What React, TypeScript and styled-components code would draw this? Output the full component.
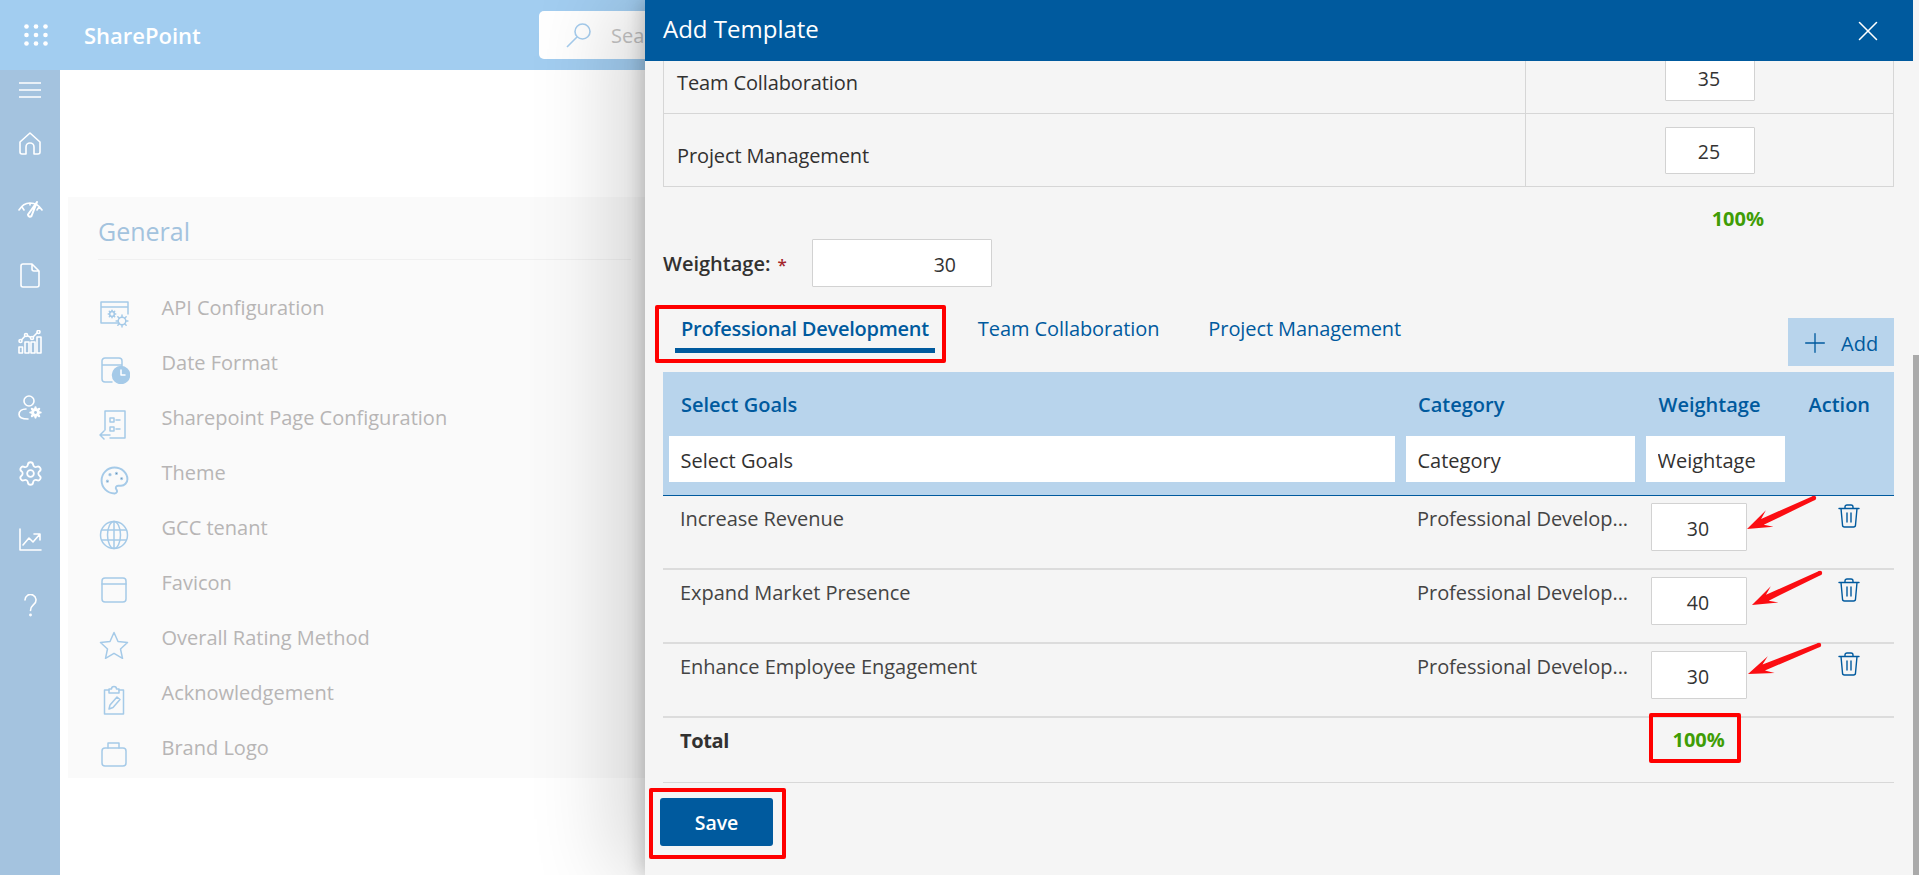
import React from "react";
import styled, { createGlobalStyle } from "styled-components";
import { Settings, Palette, Plus, X } from "lucide-react";

const NAVY = "#005a9e";
const FONT = `"Open Sans", "Noto Sans", sans-serif`;

const Global = createGlobalStyle`
  html, body { margin: 0; padding: 0; background: #fff; }
  body { font-family: ${FONT}; overflow: hidden; }
  * { box-sizing: border-box; }
`;

const Root = styled.div`
  position: relative;
  width: 1919px;
  height: 875px;
  overflow: hidden;
  background: #fff;
`;

/* ---------- backdrop page ---------- */
const TopBar = styled.header`
  display: flex;
  align-items: center;
  height: 70px;
  background: #a2cdf0;
`;
const Waffle = styled.svg`
  width: 24px;
  height: 22px;
  margin-left: 24px;
  fill: #fff;
`;
const Brand = styled.div`
  margin-left: 36px;
  width: 455px;
  color: #fff;
  font-size: 22px;
  font-weight: 600;
`;
const SearchBox = styled.div`
  display: flex;
  align-items: center;
  width: 700px;
  height: 48px;
  padding-left: 27px;
  border-radius: 5px;
  background: #fff;
  color: #c4c4c4;
  font-size: 20px;
`;
const SearchIcon = styled.svg`
  width: 26px;
  height: 25px;
  margin-right: 19px;
  fill: none;
  stroke: #a6cdee;
  stroke-width: 1.6;
`;
const Below = styled.div`
  display: flex;
  height: 805px;
`;
const Rail = styled.nav`
  display: flex;
  flex-direction: column;
  align-items: center;
  flex: 0 0 60px;
  padding-top: 12px;
  background: #a4c3df;
`;
const RailBurger = styled.svg`
  width: 22px;
  height: 16px;
  margin-bottom: 12.5px;
  stroke: #fff;
  stroke-width: 1.3;
`;
const RailItem = styled.div`
  display: flex;
  align-items: center;
  justify-content: center;
  flex: 0 0 66px;
  color: #fff;
  svg { display: block; fill: none; stroke: currentColor; stroke-width: 1.6; stroke-linecap: round; stroke-linejoin: round; }
`;
const Main = styled.main`
  flex: 1;
  padding: 127px 0 0 8px;
`;
const Card = styled.section`
  height: 581px;
  padding: 16px 0 0 30px;
  background: #fafafa;
`;
const CardTitle = styled.h2`
  margin: 0;
  height: 47px;
  width: 533px;
  border-bottom: 1px solid #f0f0f0;
  color: #a3c3de;
  font-size: 25px;
  font-weight: 400;
  line-height: 36px;
`;
const CardList = styled.ul`
  list-style: none;
  margin: 0;
  padding: 33px 0 0 1px;
`;
const CardRow = styled.li`
  display: flex;
  height: 55px;
`;
const IconSlot = styled.span`
  flex: 0 0 62.5px;
  padding-top: ${(p: { $top: number }) => p.$top}px;
  svg { display: block; fill: none; stroke: #a5cae8; stroke-width: 1.5; stroke-linejoin: round; stroke-linecap: round; }
`;
const CardLabel = styled.span`
  color: #b7b5b5;
  font-size: 20px;
  line-height: 30px;
`;

/* ---------- side panel ---------- */
const Panel = styled.aside`
  position: absolute;
  top: 0;
  right: 0;
  display: flex;
  width: 1274px;
  height: 875px;
  background: #f5f5f5;
  box-shadow: -30px 0 80px rgba(0, 0, 0, 0.16), -4px 0 16px rgba(0, 0, 0, 0.18);
`;
const PanelColumn = styled.div`
  display: flex;
  flex-direction: column;
  flex: 0 0 1268px;
  min-width: 0;
`;
const PanelHead = styled.div`
  display: flex;
  align-items: center;
  justify-content: space-between;
  flex: 0 0 61px;
  padding: 0 28px 0 18px;
  background: ${NAVY};
  color: #fff;
  position: relative;
  z-index: 1;
`;
const PanelTitle = styled.h1`
  margin: -4px 0 0;
  font-size: 24px;
  font-weight: 400;
`;
const PanelBody = styled.div`
  flex: 1;
  min-height: 0;
  overflow: hidden;
  padding: 0 19px 0 18px;
`;
const ScrollTrack = styled.div`
  display: flex;
  flex-direction: column;
  justify-content: flex-end;
  flex: 0 0 6px;
`;
const ScrollThumb = styled.div`
  height: 520px;
  background: #aaa;
`;

const RatingTable = styled.div`
  margin-top: -20px;
  border: 1px solid #d6d6d6;
  border-width: 0 1px;
`;
const RatingRow = styled.div`
  display: grid;
  grid-template-columns: 1fr 368px;
  height: 73px;
  border-bottom: 1px solid #d6d6d6;
`;
const RatingLabel = styled.div`
  padding: 30px 0 0 13px;
  color: #323130;
  font-size: 20px;
  line-height: 24px;
  letter-spacing: -0.12px;
`;
const RatingCell = styled.div`
  display: flex;
  justify-content: center;
  padding-top: 13px;
  border-left: 1px solid #d6d6d6;
`;
const NumberInput = styled.input`
  display: block;
  width: ${(p: { $w: number; $h?: number }) => p.$w}px;
  height: ${(p: { $w: number; $h?: number }) => p.$h ?? 48}px;
  padding: 2px 1px 0 0;
  border: 1px solid #d2d2d2;
  border-radius: 1px;
  outline: none;
  background: #fff;
  color: #333;
  font: 400 19.500px ${FONT};
  text-align: center;
`;
const Percent = styled.div`
  color: #3f9d05;
  font-size: 20px;
  font-weight: 700;
  line-height: 24px;
`;
const RatingTotal = styled(Percent)`
  display: flex;
  justify-content: flex-end;
  margin-top: 20px;
  padding-right: 130px;
`;
const WeightRow = styled.div`
  display: flex;
  align-items: center;
  margin-top: 8px;
`;
const WeightLabel = styled.label`
  flex: 0 0 149px;
  color: #323130;
  font-size: 20px;
  font-weight: 600;
  em { margin-left: 7px; color: #a4262c; font-size: 17px; font-style: normal; }
`;
const WeightInput = styled(NumberInput)`
  padding-left: 0;
  text-align: right;
  padding-right: 35px;
`;
const TabBar = styled.div`
  display: flex;
  justify-content: space-between;
  height: 48px;
  margin: 31px 0 6px;
`;
const Tabs = styled.div`
  display: flex;
  gap: 37px;
  align-items: flex-start;
  margin: -1px 0 0 12px;
`;
const Tab = styled.div<{ $active?: boolean }>`
  height: 36px;
  padding: 0 6px 7px;
  border-bottom: 5px solid ${(p) => (p.$active ? NAVY : "transparent")};
  color: ${NAVY};
  font-size: 20px;
  font-weight: ${(p) => (p.$active ? 600 : 400)};
  line-height: 24px;
  letter-spacing: ${(p) => (p.$active ? "-0.26px" : "-0.08px")};
`;
const AddButton = styled.button`
  display: flex;
  align-items: center;
  width: 106px;
  padding: 2px 0 0 11px;
  border: 0;
  background: #b8d4ec;
  color: ${NAVY};
  font: 400 20px ${FONT};
  svg { margin-right: 10px; flex: none; }
`;
const GOAL_COLUMNS = "726.5px 229.5px 139.5px 1fr";
const GoalHead = styled.div`
  display: grid;
  grid-template-columns: ${GOAL_COLUMNS};
  grid-template-rows: 64px 46px;
  column-gap: 10.5px;
  height: 124px;
  padding-left: 5.5px;
  background: #b8d4ec;
  border-bottom: 1px solid ${NAVY};
`;
const HeadLabel = styled.div<{ $pad: number }>`
  padding: 21px 0 0 ${(p) => p.$pad}px;
  color: ${NAVY};
  font-size: 20px;
  font-weight: 600;
  line-height: 24px;
  white-space: nowrap;
`;
const FilterInput = styled.input`
  display: block;
  width: 100%;
  height: 46px;
  padding: 2px 0 0 12px;
  border: 0;
  outline: none;
  background: #fff;
  color: #323130;
  font: 400 20px ${FONT};
`;
const GoalRow = styled.div`
  display: grid;
  grid-template-columns: ${GOAL_COLUMNS};
  column-gap: 10.5px;
  height: 74px;
  padding-left: 5.5px;
  border-bottom: 2px solid #dcdcdc;
`;
const GoalText = styled.div`
  padding: 11px 0 0 11.5px;
  color: #444;
  font-size: 20px;
  line-height: 24px;
  letter-spacing: -0.04px;
  white-space: nowrap;
`;
const GoalWeight = styled.div`
  padding: 7px 0 0 5px;
`;
const TrashSlot = styled.div`
  padding: 8px 0 0 42px;
  svg { display: block; fill: none; stroke: ${NAVY}; stroke-width: 1.4; stroke-linecap: round; stroke-linejoin: round; }
`;
const TotalRow = styled(GoalRow)`
  height: 65px;
  border-bottom: 1px solid #d8d8d8;
`;
const TotalLabel = styled(GoalText)`
  padding-top: 11px;
  color: #323130;
  font-weight: 700;
  letter-spacing: -0.4px;
`;
const TotalPercent = styled(Percent)`
  padding: 10px 0 0 27px;
`;
const SaveButton = styled.button`
  display: block;
  width: 113px;
  height: 48px;
  margin: 15px 0 0 -3px;
  border: 0;
  border-radius: 3px;
  background: ${NAVY};
  color: #fff;
  font: 600 19.500px ${FONT};
`;

/* ---------- annotations drawn on top of the screenshot ---------- */
const RedBox = styled.div<{ $x: number; $y: number; $w: number; $h: number }>`
  position: absolute;
  left: ${(p) => p.$x}px;
  top: ${(p) => p.$y}px;
  width: ${(p) => p.$w}px;
  height: ${(p) => p.$h}px;
  border: 4px solid #ff0000;
  border-radius: 2px;
  pointer-events: none;
`;
const ArrowLayer = styled.svg`
  position: absolute;
  inset: 0;
  width: 1919px;
  height: 875px;
  pointer-events: none;
`;

function Arrow({ sx, sy, tx, ty }: { sx: number; sy: number; tx: number; ty: number }) {
  const len = Math.hypot(tx - sx, ty - sy);
  const dx = (tx - sx) / len;
  const dy = (ty - sy) / len;
  const nx = -dy;
  const ny = dx;
  const at = (d: number, w: number) => `${tx - dx * d + nx * w},${ty - dy * d + ny * w}`;
  return (
    <g fill="#fb0d12">
      <polygon points={`${tx},${ty} ${at(25, 9)} ${at(17, 3.2)} ${at(len, 2.2)} ${at(len, -2.2)} ${at(17, -3.2)} ${at(25, -9)}`} />
      <circle cx={sx} cy={sy} r={2.2} />
    </g>
  );
}

/* ---------- icons ---------- */
const Cog = ({ cx, cy, r }: { cx: number; cy: number; r: number }) => (
  <g>
    <circle cx={cx} cy={cy} r={r} />
    {[0, 45, 90, 135, 180, 225, 270, 315].map((a) => {
      const c = Math.cos((a * Math.PI) / 180);
      const s = Math.sin((a * Math.PI) / 180);
      return <line key={a} x1={cx + c * r} y1={cy + s * r} x2={cx + c * (r * 1.55)} y2={cy + s * (r * 1.55)} />;
    })}
  </g>
);

const railIcons = [
  <svg width="22" height="23" viewBox="0 0 22 23" key="home">
    <path d="M1 10 11 1l10 9v10a2 2 0 0 1-2 2h-4v-7a4 4 0 0 0-8 0v7H3a2 2 0 0 1-2-2Z" />
  </svg>,
  <svg width="25" height="18" viewBox="0 0 25 18" key="gauge">
    <path d="M1 9C4 4 8 2 12 2s9 2 12 7M4 6l2 3M21 6l-2 3M12 2v2" />
    <path d="M19 1 13.500 15a2 2 0 0 1-3.500-1.500Z" strokeWidth="2" />
  </svg>,
  <svg width="20" height="25" viewBox="0 0 20 25" key="file">
    <path d="M1 3a2 2 0 0 1 2-2h9l7 7v14a2 2 0 0 1-2 2H3a2 2 0 0 1-2-2ZM12 1v5a2 2 0 0 0 2 2h5" />
  </svg>,
  <svg width="24" height="24" viewBox="0 0 24 24" key="bars">
    <path d="M1 17h3.500v6H1ZM7 12h4v11H7ZM13 12h4v11h-4ZM19 7h4v16h-4Z" />
    <path d="M2.500 11 8 5l6 3 6-6" />
    <g fill="#a4c3df">
      <circle cx="2.500" cy="11" r="1.500" />
      <circle cx="8" cy="5" r="1.500" />
      <circle cx="14" cy="8" r="1.500" />
      <circle cx="20.500" cy="2" r="1.500" />
    </g>
  </svg>,
  <svg width="25" height="25" viewBox="0 0 25 25" key="usergear">
    <circle cx="11" cy="6" r="5" />
    <path d="M8 14c-4 0-7 2-7 5.500C1 23 5 24 10 24" />
    <g fill="#fff" stroke="#fff" strokeWidth="2.200">
      <Cog cx={17.500} cy={17.500} r={3.300} />
    </g>
    <circle cx="17.500" cy="17.500" r="1.400" fill="#a4c3df" stroke="none" />
  </svg>,
  <Settings key="settings" size={27} strokeWidth={1.4} />,
  <svg width="23" height="23" viewBox="0 0 23 23" key="line">
    <path d="M1 1v21h21M4 17l6-7 4 4 7-8M15 6h6v6" />
  </svg>,
  <svg width="13" height="23" viewBox="0 0 13 23" key="help">
    <path d="M1 6a5.500 5.500 0 1 1 9 4.200C8 12 6.500 13 6.500 16.500" />
    <circle cx="6.500" cy="21" r=".6" />
  </svg>,
];

const settingRows: { label: string; top: number; icon: React.ReactNode }[] = [
  {
    label: "API Configuration",
    top: 8,
    icon: (
      <svg width="31" height="27" viewBox="0 0 31 27">
        <path d="M20 22H2V1h27v12M2 6h27" />
        <Cog cx={13} cy={13} r={2.400} />
        <Cog cx={23} cy={20} r={3.800} />
      </svg>
    ),
  },
  {
    label: "Date Format",
    top: 9,
    icon: (
      <svg width="29" height="27" viewBox="0 0 29 27" style={{ marginLeft: 2 }}>
        <path d="M11 25H4a3 3 0 0 1-3-3V4a3 3 0 0 1 3-3h14a3 3 0 0 1 3 3v5M1 8h20" />
        <circle cx="20" cy="18" r="8.500" fill="#a5cae8" />
        <path d="M20 13v5h4" stroke="#fff" />
      </svg>
    ),
  },
  {
    label: "Sharepoint Page Configuration",
    top: 7,
    icon: (
      <svg width="27" height="30" viewBox="0 0 27 30">
        <path d="M6 20V1h20v27H11M1 25h10M5 21l-4 4 4 4" />
        <path d="M11 8h4v4h-4ZM17 10h4M11 17h4v4h-4ZM17 19h4" />
      </svg>
    ),
  },
  {
    label: "Theme",
    top: 7,
    icon: <Palette size={31} strokeWidth={1.2} />,
  },
  {
    label: "GCC tenant",
    top: 7,
    icon: (
      <svg width="30" height="30" viewBox="0 0 30 30">
        <circle cx="15" cy="15" r="13.500" />
        <ellipse cx="15" cy="15" rx="6.500" ry="13.500" />
        <path d="M15 1.500v27M3 10h24M3 20h24" />
      </svg>
    ),
  },
  {
    label: "Favicon",
    top: 9,
    icon: (
      <svg width="26" height="26" viewBox="0 0 26 26" style={{ marginLeft: 2 }}>
        <rect x="1" y="1" width="24" height="24" rx="3" />
        <path d="M1 7h24" />
      </svg>
    ),
  },
  {
    label: "Overall Rating Method",
    top: 8,
    icon: (
      <svg width="30" height="28" viewBox="0 0 30 28">
        <path d="m15 1.500 4 9 9.500 1-7 6.500 2 9.300-8.500-5-8.500 5 2-9.300-7-6.500 9.500-1Z" />
      </svg>
    ),
  },
  {
    label: "Acknowledgement",
    top: 7,
    icon: (
      <svg width="22" height="30" viewBox="0 0 22 30" style={{ marginLeft: 4 }}>
        <path d="M6 5H1.500v24h19V5H16" />
        <path d="M6 8V4h2.500a2.500 2.500 0 0 1 5 0H16v4Z" />
        <path d="m6 24 1-4 7-8 3 2.500-7 8Z" />
      </svg>
    ),
  },
  {
    label: "Brand Logo",
    top: 9,
    icon: (
      <svg width="26" height="25" viewBox="0 0 26 25" style={{ marginLeft: 2 }}>
        <rect x="1" y="6" width="24" height="18" rx="3" />
        <path d="M7 6V1h11v5" />
      </svg>
    ),
  },
];

const Trash = () => (
  <svg width="22" height="24" viewBox="0 0 22 24">
    <path d="M1 4.500h20M7 4.500V3a2 2 0 0 1 2-2h4a2 2 0 0 1 2 2v1.500M3 4.500 4.500 21a2 2 0 0 0 2 2h9a2 2 0 0 0 2-2L19 4.500M9 9v9M13 9v9" />
  </svg>
);

const goals = [
  { name: "Increase Revenue", weight: "30" },
  { name: "Expand Market Presence", weight: "40" },
  { name: "Enhance Employee Engagement", weight: "30" },
];

export default function App() {
  return (
    <Root>
      <Global />
      <TopBar>
        <Waffle viewBox="0 0 24 22">
          {[2.5, 12, 21.5].flatMap((x) =>
            [2.5, 11, 19.5].map((y) => <circle key={`${x}-${y}`} cx={x} cy={y} r={2.3} />)
          )}
        </Waffle>
        <Brand>SharePoint</Brand>
        <SearchBox>
          <SearchIcon viewBox="0 0 26 25">
            <circle cx="16.500" cy="8.500" r="7.500" />
            <path d="M11 14 1 24" />
          </SearchIcon>
          Search
        </SearchBox>
      </TopBar>
      <Below>
        <Rail>
          <RailBurger viewBox="0 0 22 16">
            <path d="M0 1h22M0 8h22M0 15h22" />
          </RailBurger>
          {railIcons.map((icon, i) => (
            <RailItem key={i}>{icon}</RailItem>
          ))}
        </Rail>
        <Main>
          <Card>
            <CardTitle>General</CardTitle>
            <CardList>
              {settingRows.map((r) => (
                <CardRow key={r.label}>
                  <IconSlot $top={r.top}>{r.icon}</IconSlot>
                  <CardLabel>{r.label}</CardLabel>
                </CardRow>
              ))}
            </CardList>
          </Card>
        </Main>
      </Below>

      <Panel>
        <PanelColumn>
          <PanelHead>
            <PanelTitle>Add Template</PanelTitle>
            <X size={34} strokeWidth={1.1} />
          </PanelHead>
          <PanelBody>
            <RatingTable>
              <RatingRow>
                <RatingLabel>Team Collaboration</RatingLabel>
                <RatingCell>
                  <NumberInput readOnly value="35" $w={90} $h={47} />
                </RatingCell>
              </RatingRow>
              <RatingRow>
                <RatingLabel>Project Management</RatingLabel>
                <RatingCell>
                  <NumberInput readOnly value="25" $w={90} $h={47} />
                </RatingCell>
              </RatingRow>
            </RatingTable>
            <RatingTotal>100%</RatingTotal>
            <WeightRow>
              <WeightLabel>
                Weightage:<em>*</em>
              </WeightLabel>
              <WeightInput readOnly value="30" $w={180} />
            </WeightRow>
            <TabBar>
              <Tabs>
                <Tab $active>Professional Development</Tab>
                <Tab>Team Collaboration</Tab>
                <Tab>Project Management</Tab>
              </Tabs>
              <AddButton>
                <Plus size={32} strokeWidth={1} />
                Add
              </AddButton>
            </TabBar>
            <GoalHead>
              <HeadLabel $pad={12.5}>Select Goals</HeadLabel>
              <HeadLabel $pad={12.5}>Category</HeadLabel>
              <HeadLabel $pad={13}>Weightage</HeadLabel>
              <HeadLabel $pad={13}>Action</HeadLabel>
              <FilterInput readOnly value="Select Goals" />
              <FilterInput readOnly value="Category" />
              <FilterInput readOnly value="Weightage" />
            </GoalHead>
            {goals.map((g) => (
              <GoalRow key={g.name}>
                <GoalText>{g.name}</GoalText>
                <GoalText>Professional Develop...</GoalText>
                <GoalWeight>
                  <NumberInput readOnly value={g.weight} $w={96} />
                </GoalWeight>
                <TrashSlot>
                  <Trash />
                </TrashSlot>
              </GoalRow>
            ))}
            <TotalRow>
              <TotalLabel>Total</TotalLabel>
              <span />
              <TotalPercent>100%</TotalPercent>
              <span />
            </TotalRow>
            <SaveButton>Save</SaveButton>
          </PanelBody>
        </PanelColumn>
        <ScrollTrack>
          <ScrollThumb />
        </ScrollTrack>
      </Panel>

      <RedBox $x={655} $y={305} $w={291} $h={58} />
      <RedBox $x={1649} $y={713} $w={92} $h={50} />
      <RedBox $x={649} $y={788} $w={137} $h={71} />
      <ArrowLayer viewBox="0 0 1919 875">
        <Arrow sx={1814} sy={498} tx={1747} ty={529} />
        <Arrow sx={1820} sy={573} tx={1752} ty={605} />
        <Arrow sx={1819} sy={645} tx={1748} ty={674} />
      </ArrowLayer>
    </Root>
  );
}
